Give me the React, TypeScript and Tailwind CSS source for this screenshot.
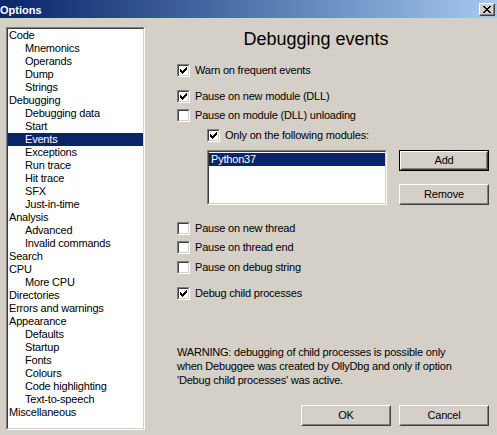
import React from "react";

const FONT = { fontFamily: '"Liberation Sans", Arial, sans-serif' };

function Check() {
  const cols = [2, 3, 4, 3, 2, 1, 0];
  return (
    <svg width="7" height="7" viewBox="0 0 7 7" shapeRendering="crispEdges" className="block">
      {cols.map((y, x) => (
        <rect key={x} x={x} y={y} width="1" height="3" fill="#000" />
      ))}
    </svg>
  );
}

function CheckBox({ checked }: { checked: boolean }) {
  return (
    <span className="block w-[13px] h-[13px] shrink-0 border border-t-[#808080] border-l-[#808080] border-b-white border-r-white">
      <span className="flex w-[11px] h-[11px] items-center justify-center bg-white border border-t-[#404040] border-l-[#404040] border-b-[#d4d0c8] border-r-[#d4d0c8]">
        {checked ? <Check /> : null}
      </span>
    </span>
  );
}

function Row({ checked, label, className }: { checked: boolean; label: string; className: string }) {
  return (
    <div className={"flex items-center h-[13px] " + className}>
      <CheckBox checked={checked} />
      <span className="ml-[5px] text-[11px] leading-[13px] tracking-[-0.2px] text-black whitespace-nowrap">{label}</span>
    </div>
  );
}

function Button({ label, isDefault, className }: { label: string; isDefault?: boolean; className?: string }) {
  const inner = (
    <div className="flex-1 flex border border-t-white border-l-white border-b-[#404040] border-r-[#404040]">
      <div className="flex-1 flex items-center justify-center border border-t-[#d4d0c8] border-l-[#d4d0c8] border-b-[#808080] border-r-[#808080] text-[11px] leading-[13px] tracking-[-0.2px] text-black">
        {label}
      </div>
    </div>
  );
  return (
    <div className={"w-[90px] h-[21px] flex " + (isDefault ? "border border-black " : "") + (className || "")}>
      {inner}
    </div>
  );
}

const treeItems: [string, number][] = [
  ["Code", 0],
  ["Mnemonics", 1],
  ["Operands", 1],
  ["Dump", 1],
  ["Strings", 1],
  ["Debugging", 0],
  ["Debugging data", 1],
  ["Start", 1],
  ["Events", 1],
  ["Exceptions", 1],
  ["Run trace", 1],
  ["Hit trace", 1],
  ["SFX", 1],
  ["Just-in-time", 1],
  ["Analysis", 0],
  ["Advanced", 1],
  ["Invalid commands", 1],
  ["Search", 0],
  ["CPU", 0],
  ["More CPU", 1],
  ["Directories", 0],
  ["Errors and warnings", 0],
  ["Appearance", 0],
  ["Defaults", 1],
  ["Startup", 1],
  ["Fonts", 1],
  ["Colours", 1],
  ["Code highlighting", 1],
  ["Text-to-speech", 1],
  ["Miscellaneous", 0],
];

export default function App() {
  return (
    <div className="w-[497px] h-[435px] bg-[#d4d0c8] overflow-hidden flex flex-col" style={FONT}>
      {/* Title bar */}
      <div className="h-[18px] shrink-0 flex items-start bg-gradient-to-r from-[#0a246a] to-[#a6caf0]">
        <span className="pt-[4px] text-[11px] leading-[13px] font-bold text-white">Options</span>
        <div className="ml-auto mr-[2px] mt-[3px] w-[16px] h-[13px] flex border border-t-white border-l-white border-b-[#404040] border-r-[#404040]">
          <div className="flex-1 flex items-center justify-center bg-[#d4d0c8] border border-t-[#d4d0c8] border-l-[#d4d0c8] border-b-[#808080] border-r-[#808080]">
            <svg width="8" height="7" viewBox="0 0 8 7" shapeRendering="crispEdges">
              <path d="M0 0h2v1h-2zM6 0h2v1h-2zM1 1h2v1h-2zM5 1h2v1h-2zM2 2h4v1h-4zM3 3h2v1h-2zM2 4h4v1h-4zM1 5h2v1h-2zM5 5h2v1h-2zM0 6h2v1h-2zM6 6h2v1h-2z" fill="#000" />
            </svg>
          </div>
        </div>
      </div>

      <div className="flex flex-1">
        {/* Tree */}
        <div className="ml-[6px] mt-[9px] w-[139px] h-[403px] shrink-0 flex border border-t-[#808080] border-l-[#808080] border-b-white border-r-white">
          <div className="flex-1 flex flex-col bg-white border border-t-[#404040] border-l-[#404040] border-b-[#d4d0c8] border-r-[#d4d0c8]">
            {treeItems.map(([name, lvl]) => {
              const sel = name === "Events";
              return (
                <div
                  key={name}
                  className={
                    "h-[13px] text-[11px] leading-[13px] tracking-[-0.2px] whitespace-nowrap " +
                    (lvl ? "pl-[17px] " : "pl-[1px] ") +
                    (sel ? "bg-[#0a246a] text-white" : "text-black")
                  }
                >
                  {name}
                </div>
              );
            })}
          </div>
        </div>

        {/* Right panel */}
        <div className="flex-1 flex flex-col pl-[32px] pr-[8px]">
          <div className="mt-[11px] h-[21px] text-[18px] leading-[21px] text-black text-center pr-[2px] -ml-[32px]">
            Debugging events
          </div>
          <Row checked label="Warn on frequent events" className="mt-[14px]" />
          <Row checked label="Pause on new module (DLL)" className="mt-[13px]" />
          <Row checked={false} label="Pause on module (DLL) unloading" className="mt-[6px]" />
          <Row checked label="Only on the following modules:" className="mt-[7px] ml-[30px]" />
          <div className="mt-[8px] ml-[30px] flex">
            <div className="w-[180px] h-[55px] flex border border-t-[#808080] border-l-[#808080] border-b-white border-r-white">
              <div className="flex-1 bg-white border border-t-[#404040] border-l-[#404040] border-b-[#d4d0c8] border-r-[#d4d0c8] pt-[1px]">
                <div className="h-[13px] bg-[#0a246a] text-white text-[11px] leading-[13px] tracking-[-0.2px] pl-[2px]">Python37</div>
              </div>
            </div>
            <div className="ml-auto flex flex-col">
              <Button label="Add" isDefault />
              <Button label="Remove" className="mt-[13px]" />
            </div>
          </div>
          <Row checked={false} label="Pause on new thread" className="mt-[17px]" />
          <Row checked={false} label="Pause on thread end" className="mt-[6px]" />
          <Row checked={false} label="Pause on debug string" className="mt-[7px]" />
          <Row checked label="Debug child processes" className="mt-[13px]" />
          <div className="mt-[45px] text-[11px] leading-[14px] tracking-[-0.2px] text-black whitespace-nowrap">
            WARNING: debugging of child processes is possible only
            <br />
            when Debuggee was created by OllyDbg and only if option
            <br />
            'Debug child processes' was active.
          </div>
          <div className="mt-[18px] flex justify-end gap-[8px]">
            <Button label="OK" />
            <Button label="Cancel" />
          </div>
        </div>
      </div>
    </div>
  );
}
